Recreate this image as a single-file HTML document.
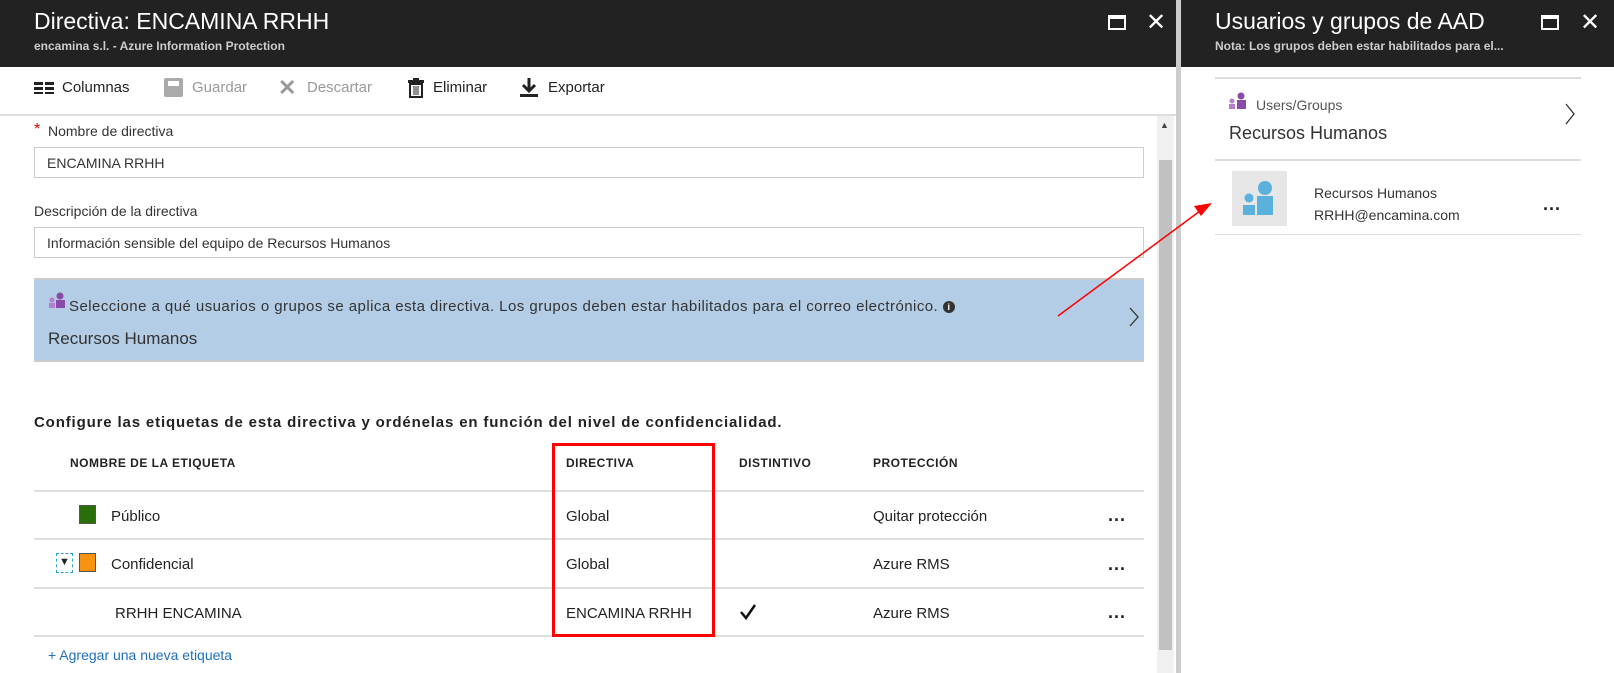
<!DOCTYPE html>
<html><head><meta charset="utf-8"><style>
*{margin:0;padding:0;box-sizing:border-box}
body{width:1614px;height:673px;overflow:hidden;background:#fff;font-family:"Liberation Sans",sans-serif;color:#333;position:relative}
.a{position:absolute;white-space:nowrap}
.hdr{background:#222;top:0;height:67px}
.t1{color:#fff;font-size:23px}
.t2{color:#ccc;font-size:12px;font-weight:bold}
.inp{border:1px solid #ccc;height:31px;font-size:14px;padding:7px 12px;color:#333}
.hl{height:2px;background:#ddd}
.th{font-size:12px;font-weight:bold;color:#222;letter-spacing:0.5px}
.td{font-size:15px;color:#222}
.dots{font-size:18px;font-weight:bold;letter-spacing:1px;color:#222}
</style></head><body>
<div class="a hdr" style="left:0;width:1176px"></div>
<div class="a hdr" style="left:1181px;width:433px"></div>
<div class="a" style="left:1176px;top:0;width:5px;height:673px;background:#ccc"></div>
<div class="a t1" style="left:34px;top:8px">Directiva: ENCAMINA RRHH</div>
<div class="a t2" style="left:34px;top:39px">encamina s.l. - Azure Information Protection</div>
<div class="a" style="left:1108px;top:15px;width:18px;height:15px;border:2px solid #fff;border-top-width:4px"></div>
<div class="a" style="left:1146px;top:8px;color:#fff;font-size:24px">✕</div>
<div class="a t1" style="left:1215px;top:8px">Usuarios y grupos de AAD</div>
<div class="a t2" style="left:1215px;top:39px">Nota: Los grupos deben estar habilitados para el...</div>
<div class="a" style="left:1541px;top:15px;width:18px;height:15px;border:2px solid #fff;border-top-width:4px"></div>
<div class="a" style="left:1580px;top:8px;color:#fff;font-size:24px">✕</div>

<!-- toolbar -->
<div class="a" style="left:34px;top:82px;width:20px;height:12px;background:repeating-linear-gradient(#222 0 3px,transparent 3px 5px);"></div>
<div class="a" style="left:43px;top:80px;width:2px;height:16px;background:#fff"></div>
<div class="a" style="left:62px;top:79px;font-size:15px;color:#222">Columnas</div>
<div class="a" style="left:164px;top:78px;width:19px;height:19px;background:#aaa;border-radius:2px"></div>
<div class="a" style="left:168px;top:81px;width:11px;height:5px;background:#fff"></div>
<div class="a" style="left:192px;top:79px;font-size:15px;color:#999">Guardar</div>
<div class="a" style="left:278px;top:75px;font-size:22px;color:#999;font-weight:bold">✕</div>
<div class="a" style="left:307px;top:79px;font-size:15px;color:#999">Descartar</div>
<svg class="a" style="left:408px;top:78px" width="16" height="20"><rect x="0" y="2" width="16" height="3" fill="#222"/><rect x="5" y="0" width="6" height="2" fill="#222"/><rect x="2" y="6" width="12" height="13" fill="none" stroke="#222" stroke-width="2"/><path d="M6 8v9M8 8v9M10 8v9" stroke="#222" stroke-width="1"/></svg>
<div class="a" style="left:433px;top:79px;font-size:15px;color:#222">Eliminar</div>
<svg class="a" style="left:518px;top:76px" width="22" height="22"><path d="M11 2v13M5 9l6 6 6-6" stroke="#222" stroke-width="3" fill="none"/><rect x="2" y="18" width="18" height="3" fill="#222"/></svg>
<div class="a" style="left:548px;top:79px;font-size:15px;color:#222">Exportar</div>
<div class="a hl" style="left:0;top:114px;width:1176px"></div>

<!-- scrollbar -->
<div class="a" style="left:1157px;top:116px;width:17px;height:557px;background:#f0f0f0"></div>
<div class="a" style="left:1159px;top:160px;width:13px;height:490px;background:#c1c1c1"></div>
<div class="a" style="left:1160px;top:120px;font-size:9px;color:#444">▲</div>

<!-- form -->
<div class="a" style="left:34px;top:121px;color:#e00;font-size:16px">*</div>
<div class="a" style="left:48px;top:123px;font-size:14px">Nombre de directiva</div>
<div class="a inp" style="left:34px;top:147px;width:1110px">ENCAMINA RRHH</div>
<div class="a" style="left:34px;top:203px;font-size:14px">Descripción de la directiva</div>
<div class="a inp" style="left:34px;top:227px;width:1110px">Información sensible del equipo de Recursos Humanos</div>

<div class="a" style="left:34px;top:278px;width:1110px;height:84px;background:#b3cde6;border-top:2px solid #ccc;border-bottom:2px solid #ccc"></div>
<svg class="a" style="left:48px;top:292px" width="18" height="16"><circle cx="12" cy="4" r="3.5" fill="#8a4aa8"/><rect x="8" y="8" width="9" height="8" fill="#8a4aa8"/><circle cx="4" cy="8" r="2.5" fill="#b77ed0"/><rect x="1" y="11" width="6" height="5" fill="#b77ed0"/></svg>
<div class="a" style="left:69px;top:298px;font-size:15px;color:#333;letter-spacing:0.45px">Seleccione a qué usuarios o grupos se aplica esta directiva. Los grupos deben estar habilitados para el correo electrónico. <span style="display:inline-block;width:12px;height:12px;border-radius:6px;background:#333;color:#fff;font-size:9px;text-align:center;line-height:12px;font-weight:bold;letter-spacing:0;vertical-align:1px">i</span></div>
<div class="a" style="left:48px;top:329px;font-size:17px;color:#333">Recursos Humanos</div>
<svg class="a" style="left:1128px;top:306px" width="12" height="22"><path d="M2 2l8 9-8 9" stroke="#333" stroke-width="1.3" fill="none"/></svg>

<div class="a" style="left:34px;top:414px;font-size:15px;color:#222;font-weight:bold;letter-spacing:0.85px">Configure las etiquetas de esta directiva y ordénelas en función del nivel de confidencialidad.</div>
<div class="a th" style="left:70px;top:456px">NOMBRE DE LA ETIQUETA</div>
<div class="a th" style="left:566px;top:456px">DIRECTIVA</div>
<div class="a th" style="left:739px;top:456px">DISTINTIVO</div>
<div class="a th" style="left:873px;top:456px">PROTECCIÓN</div>
<div class="a hl" style="left:34px;top:490px;width:1110px"></div>
<div class="a hl" style="left:34px;top:538px;width:1110px"></div>
<div class="a hl" style="left:34px;top:587px;width:1110px"></div>
<div class="a hl" style="left:34px;top:635px;width:1110px"></div>

<div class="a" style="left:79px;top:505px;width:17px;height:19px;background:#2a6e0a;border:1px solid #555"></div>
<div class="a td" style="left:111px;top:508px">Público</div>
<div class="a td" style="left:566px;top:508px">Global</div>
<div class="a td" style="left:873px;top:508px">Quitar protección</div>
<div class="a dots" style="left:1108px;top:505px">...</div>

<div class="a" style="left:56px;top:553px;width:17px;height:20px;border:1px dashed #2aa0d8"></div>
<div class="a" style="left:59px;top:556px;font-size:11px;color:#222">▼</div>
<div class="a" style="left:79px;top:553px;width:17px;height:19px;background:#f7930f;border:1px solid #555"></div>
<div class="a td" style="left:111px;top:556px">Confidencial</div>
<div class="a td" style="left:566px;top:556px">Global</div>
<div class="a td" style="left:873px;top:556px">Azure RMS</div>
<div class="a dots" style="left:1108px;top:554px">...</div>

<div class="a td" style="left:115px;top:605px">RRHH ENCAMINA</div>
<div class="a td" style="left:566px;top:605px">ENCAMINA RRHH</div>
<svg class="a" style="left:739px;top:603px" width="18" height="18"><path d="M2 9l5 6L16 2" stroke="#111" stroke-width="2.5" fill="none"/></svg>
<div class="a td" style="left:873px;top:605px">Azure RMS</div>
<div class="a dots" style="left:1108px;top:602px">...</div>
<div class="a" style="left:48px;top:647px;font-size:14px;color:#1f6fc0">+ Agregar una nueva etiqueta</div>

<div class="a" style="left:552px;top:443px;width:163px;height:194px;border:3px solid #f00"></div>

<!-- right panel -->
<div class="a hl" style="left:1215px;top:77px;width:366px"></div>
<svg class="a" style="left:1228px;top:92px" width="20" height="17"><circle cx="13" cy="4" r="3.5" fill="#8a4aa8"/><rect x="9" y="8" width="9" height="9" fill="#8a4aa8"/><circle cx="4" cy="9" r="2.5" fill="#b77ed0"/><rect x="1" y="12" width="6" height="5" fill="#b77ed0"/></svg>
<div class="a" style="left:1256px;top:97px;font-size:14px;color:#555">Users/Groups</div>
<div class="a" style="left:1229px;top:123px;font-size:18px;color:#333">Recursos Humanos</div>
<svg class="a" style="left:1564px;top:102px" width="12" height="24"><path d="M2 2l8 10-8 10" stroke="#333" stroke-width="1.3" fill="none"/></svg>
<div class="a hl" style="left:1215px;top:159px;width:366px"></div>
<div class="a" style="left:1232px;top:171px;width:55px;height:55px;background:#e6e6e6"></div>
<svg class="a" style="left:1240px;top:179px" width="40" height="40"><circle cx="25" cy="9" r="7" fill="#5ab2dc"/><path d="M17 17h16v19H17z" fill="#5ab2dc"/><circle cx="9" cy="19" r="4.5" fill="#5ab2dc"/><path d="M3 26h12v10H3z" fill="#5ab2dc"/></svg>
<div class="a" style="left:1314px;top:185px;font-size:14px;color:#333">Recursos Humanos</div>
<div class="a" style="left:1314px;top:207px;font-size:14px;color:#333">RRHH@encamina.com</div>
<div class="a dots" style="left:1543px;top:194px">...</div>
<div class="a" style="left:1215px;top:234px;width:366px;height:1px;background:#ddd"></div>

<!-- arrow -->
<svg class="a" style="left:0;top:0" width="1614" height="673"><line x1="1058" y1="316" x2="1200" y2="211" stroke="#f00" stroke-width="1.5"/><path d="M1212 203l-18 3 7 10z" fill="#f00"/></svg>
</body></html>
